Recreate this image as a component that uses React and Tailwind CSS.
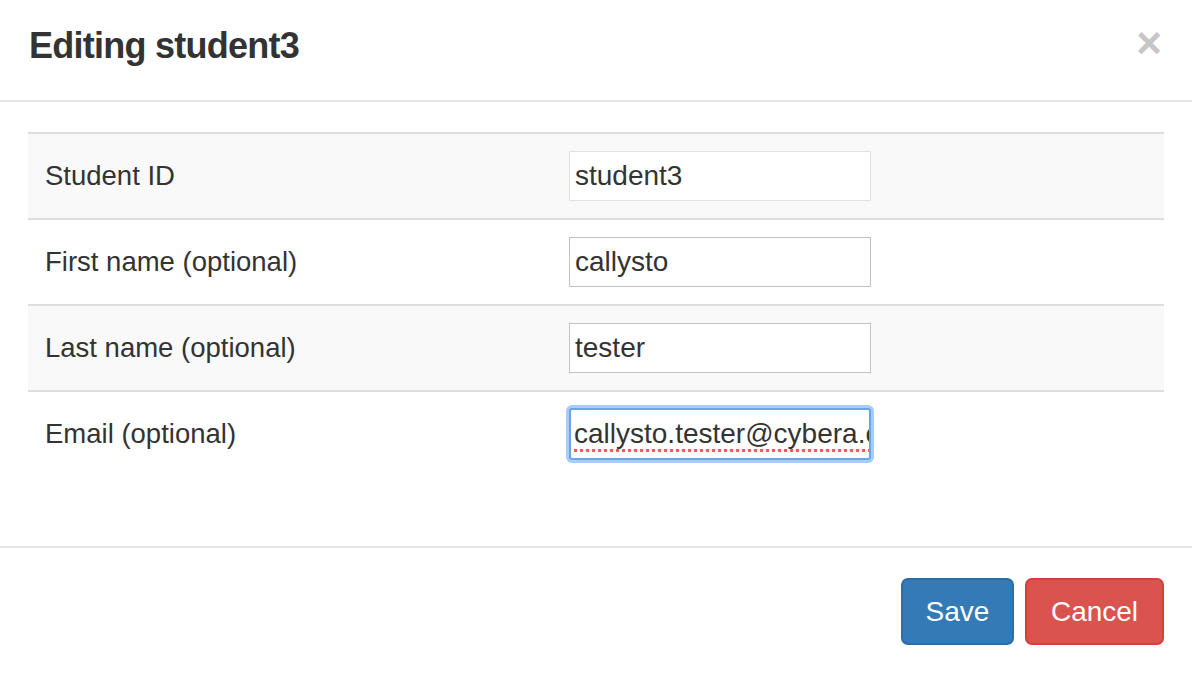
import React from 'react';

const rows = [
  { label: 'Student ID', value: 'student3', striped: true, border: 'border-[#e2e2e2]' },
  { label: 'First name (optional)', value: 'callysto', striped: false, border: 'border-[#c2c2c2]' },
  { label: 'Last name (optional)', value: 'tester', striped: true, border: 'border-[#c2c2c2]' },
  { label: 'Email (optional)', value: 'callysto.tester@cybera.ca', striped: false, focused: true },
];

function App() {
  return (
    <div className="w-[1192px] h-[676px] bg-white text-[#333] font-['Liberation_Sans',Arial,sans-serif] overflow-hidden">
      <div className="h-[102px] border-b-2 border-[#e5e5e5] flex items-center justify-between pl-[29px] pr-[30px]">
        <h4 className="text-[36px] font-bold tracking-[-0.75px] leading-none pb-[8px]">Editing student3</h4>
        <button className="text-[44px] font-bold leading-none text-[#c6c6c6] pb-[14px]">×</button>
      </div>

      <div className="px-[28px] pt-[30px] pb-[70px]">
        {rows.map((row) => (
          <div
            key={row.label}
            className={`grid grid-cols-[541px_1fr] items-center h-[86px] border-t-2 border-[#ddd] ${row.striped ? 'bg-[#f9f9f9]' : 'bg-white'}`}
          >
            <div className="pl-[17px] text-[27.5px]">{row.label}</div>
            <div>
              {row.focused ? (
                <div className="w-[308px] h-[58px] -ml-[3px] rounded-[6px] bg-[#a9cdf8] p-[3px]">
                  <div className="w-full h-full rounded-[3px] border-2 border-[#6aa3ee] bg-white flex items-center pl-[3px] overflow-hidden">
                    <span className="text-[28px] whitespace-nowrap underline decoration-dotted decoration-[#f35b5b] decoration-[3px] underline-offset-[6px]">
                      {row.value}
                    </span>
                  </div>
                </div>
              ) : (
                <div className={`w-[302px] h-[50px] border ${row.border} bg-white flex items-center pl-[5px] overflow-hidden`}>
                  <span className="text-[28px] whitespace-nowrap">{row.value}</span>
                </div>
              )}
            </div>
          </div>
        ))}
      </div>

      <div className="border-t-2 border-[#e5e5e5] flex justify-end gap-[11px] pt-[30px] pr-[28px]">
        <button className="h-[67px] w-[113px] rounded-[7px] border-2 border-[#2e6da4] bg-[#337ab7] text-white text-[28px]">
          Save
        </button>
        <button className="h-[67px] w-[139px] rounded-[7px] border-2 border-[#d43f3a] bg-[#d9534f] text-white text-[28px]">
          Cancel
        </button>
      </div>
    </div>
  );
}

export default App;
